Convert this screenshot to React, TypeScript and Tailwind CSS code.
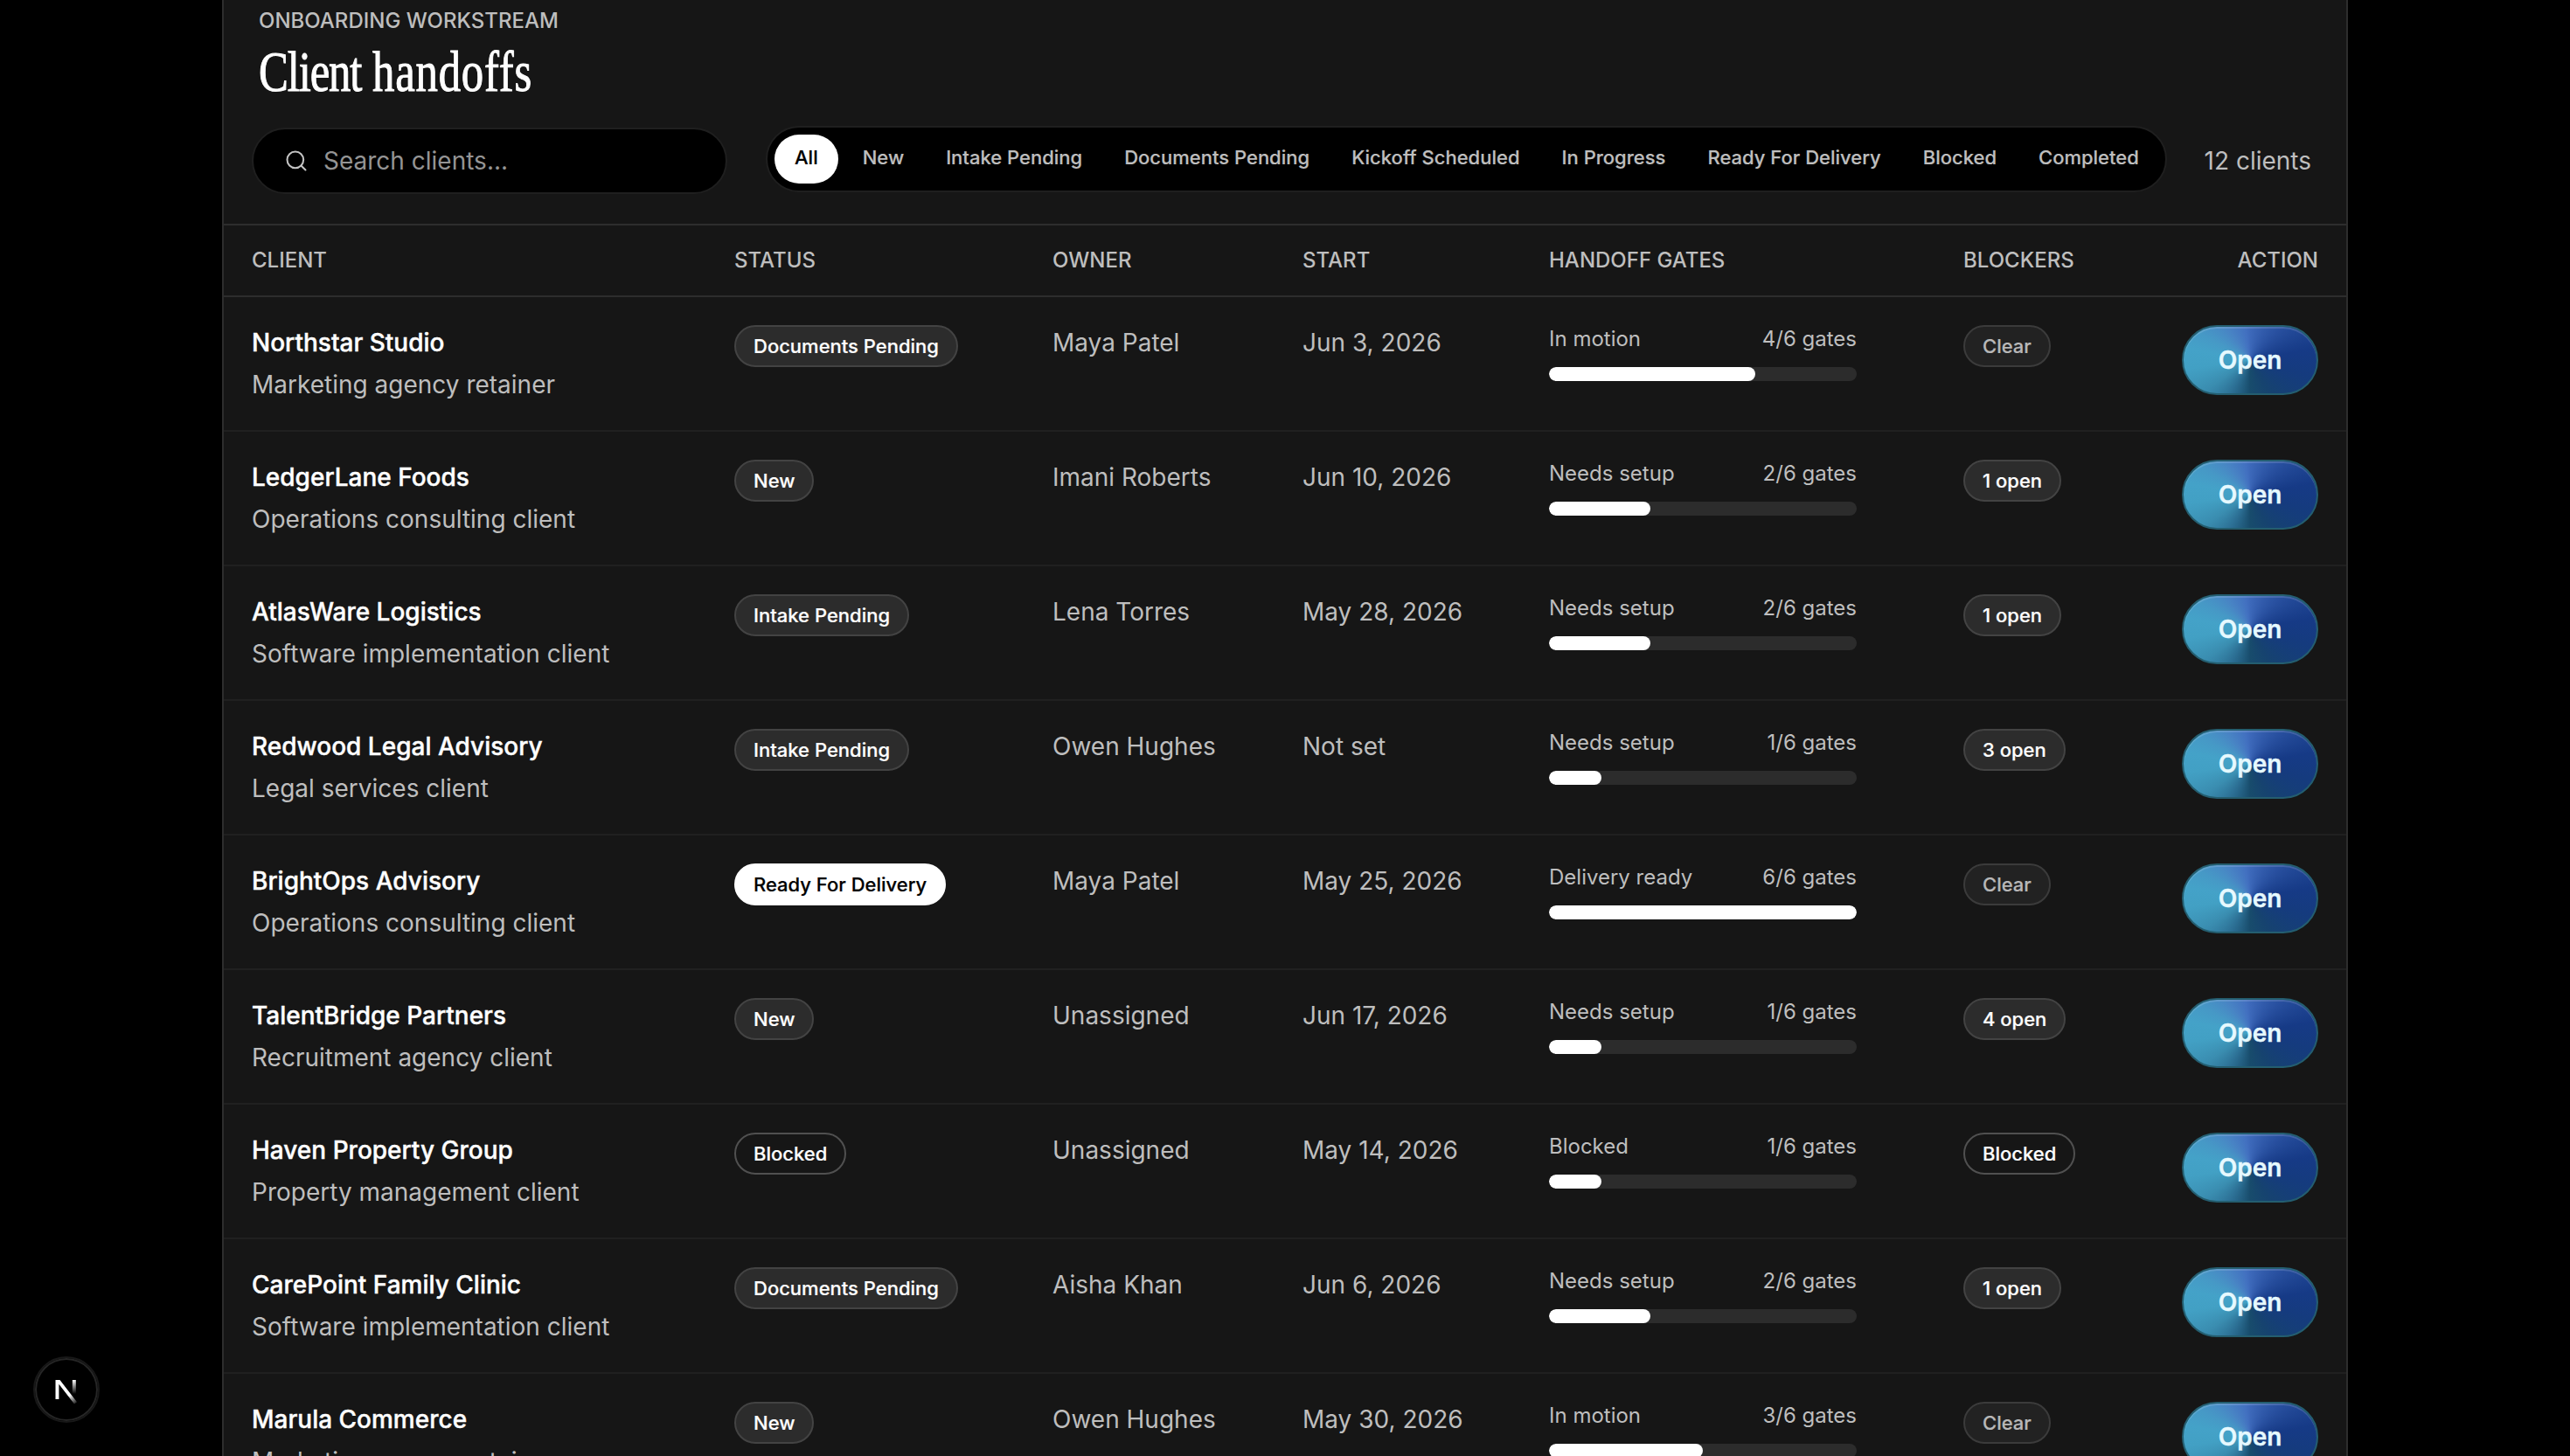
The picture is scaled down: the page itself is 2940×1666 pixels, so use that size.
import { Search } from "lucide-react";
import clsx from "clsx";

type Client = {
  name: string;
  type: string;
  status: string;
  owner: string;
  start: string;
  stage: string;
  gates: number;
  blockers: string;
};

const filters = [
  "All",
  "New",
  "Intake Pending",
  "Documents Pending",
  "Kickoff Scheduled",
  "In Progress",
  "Ready For Delivery",
  "Blocked",
  "Completed",
];

const columns = ["Client", "Status", "Owner", "Start", "Handoff gates", "Blockers", "Action"];

const clients: Client[] = [
  { name: "Northstar Studio", type: "Marketing agency retainer", status: "Documents Pending", owner: "Maya Patel", start: "Jun 3, 2026", stage: "In motion", gates: 4, blockers: "Clear" },
  { name: "LedgerLane Foods", type: "Operations consulting client", status: "New", owner: "Imani Roberts", start: "Jun 10, 2026", stage: "Needs setup", gates: 2, blockers: "1 open" },
  { name: "AtlasWare Logistics", type: "Software implementation client", status: "Intake Pending", owner: "Lena Torres", start: "May 28, 2026", stage: "Needs setup", gates: 2, blockers: "1 open" },
  { name: "Redwood Legal Advisory", type: "Legal services client", status: "Intake Pending", owner: "Owen Hughes", start: "Not set", stage: "Needs setup", gates: 1, blockers: "3 open" },
  { name: "BrightOps Advisory", type: "Operations consulting client", status: "Ready For Delivery", owner: "Maya Patel", start: "May 25, 2026", stage: "Delivery ready", gates: 6, blockers: "Clear" },
  { name: "TalentBridge Partners", type: "Recruitment agency client", status: "New", owner: "Unassigned", start: "Jun 17, 2026", stage: "Needs setup", gates: 1, blockers: "4 open" },
  { name: "Haven Property Group", type: "Property management client", status: "Blocked", owner: "Unassigned", start: "May 14, 2026", stage: "Blocked", gates: 1, blockers: "Blocked" },
  { name: "CarePoint Family Clinic", type: "Software implementation client", status: "Documents Pending", owner: "Aisha Khan", start: "Jun 6, 2026", stage: "Needs setup", gates: 2, blockers: "1 open" },
  { name: "Marula Commerce", type: "Marketing agency retainer", status: "New", owner: "Owen Hughes", start: "May 30, 2026", stage: "In motion", gates: 3, blockers: "Clear" },
];

const rowGrid = "grid grid-cols-[552px_364px_286px_282px_474px_1fr] px-8";

function Badge({ label }: { label: string }) {
  return (
    <span
      className={clsx(
        "inline-flex h-12 items-center rounded-full border-2 px-5 text-[22px] font-medium whitespace-nowrap [-webkit-text-stroke:0.2px]",
        label === "Ready For Delivery" && "border-white bg-white text-black",
        label === "Blocked" && "border-[#505050] text-white",
        label === "Clear" && "border-[#3b3b3b] bg-[#222222] text-[#b8b8b8]",
        !["Ready For Delivery", "Blocked", "Clear"].includes(label) &&
          "border-[#434343] bg-[#2c2c2c] text-white",
      )}
    >
      {label}
    </span>
  );
}

function OpenButton() {
  return (
    <button className="h-20 w-[156px] rounded-full border-2 border-[#245e70] bg-[conic-gradient(from_0deg,#3d69ba_0deg,#2a52a2_40deg,#163a86_80deg,#153b7e_105deg,#16436f_150deg,#184c6c_180deg,#2c6f94_210deg,#3a8db0_236deg,#42a0c4_262deg,#44a2c8_280deg,#4699c6_298deg,#4883c4_325deg,#4270c0_352deg,#3d69ba_360deg)] text-[28px] font-semibold text-[#e6f9ff] shadow-[inset_0_2px_0_rgba(255,255,255,0.14)] [-webkit-text-stroke:0.4px]">
      Open
    </button>
  );
}

function ClientRow({ client }: { client: Client }) {
  return (
    <div className={clsx(rowGrid, "h-[154px] border-b-2 border-[#202020] pt-8 text-[28px] leading-10 text-[#bebebe]")}>
      <div>
        <div className="font-medium text-white [-webkit-text-stroke:0.4px]">{client.name}</div>
        <div className="mt-2">{client.type}</div>
      </div>
      <div>
        <Badge label={client.status} />
      </div>
      <div>{client.owner}</div>
      <div>{client.start}</div>
      <div className="w-[352px]">
        <div className="flex justify-between text-2xl leading-8">
          <span>{client.stage}</span>
          <span>{client.gates}/6 gates</span>
        </div>
        <div className="mt-4 h-4 overflow-hidden rounded-full bg-[#2c2c2c]">
          <div
            className="h-full rounded-full bg-white"
            style={{ width: `${Math.round((client.gates / 6) * 100)}%` }}
          />
        </div>
      </div>
      <div className="flex items-start justify-between">
        <Badge label={client.blockers} />
        <OpenButton />
      </div>
    </div>
  );
}

function DevBadge() {
  return (
    <div className="absolute top-[1552px] left-[38px] flex size-[76px] items-center justify-center rounded-full border-2 border-[#181818] bg-black shadow-[inset_0_0_0_2px_#262626]">
      <svg width="68" height="68" viewBox="0 0 68 68" fill="none">
        <defs>
          <linearGradient id="diag" x1="38" y1="40" x2="46" y2="51" gradientUnits="userSpaceOnUse">
            <stop stopColor="#fff" />
            <stop offset="1" stopColor="#fff" stopOpacity="0" />
          </linearGradient>
          <linearGradient id="stem" x1="43" y1="23" x2="43" y2="39" gradientUnits="userSpaceOnUse">
            <stop stopColor="#fff" />
            <stop offset="1" stopColor="#fff" stopOpacity="0" />
          </linearGradient>
        </defs>
        <path d="M21.5 23h5L46 48.2l-3 2.3L25.4 27.8V45h-3.9z" fill="url(#diag)" />
        <path d="M40.8 23h4v16h-4z" fill="url(#stem)" />
      </svg>
    </div>
  );
}

export default function App() {
  return (
    <main className="relative h-[1666px] w-[2940px] overflow-hidden bg-black font-[Inter,sans-serif] text-white">
      <section className="mx-auto h-[1740px] w-[2432px] border-x-2 border-[#2d2d2d] bg-[#161616]">
        <header className="flex h-[258px] flex-col border-b-2 border-[#2d2d2d] px-8 pt-2">
          <div className="pl-2">
            <p className="text-2xl leading-8 font-medium text-[#bebebe] uppercase">Onboarding workstream</p>
            <h2 className="mt-0.5 h-20 origin-left scale-x-[0.77] font-['Liberation_Serif',serif] text-[66px] leading-20 whitespace-nowrap [-webkit-text-stroke:1px]">
              <span className="tracking-[-1.5px]">Client</span>{" "}
              <span className="tracking-[1px]">handoffs</span>
            </h2>
          </div>
          <div className="mt-[22px] flex items-start">
            <label className="mt-0.5 flex h-[76px] w-[544px] items-center rounded-full border-2 border-[#1f1f1f] bg-black pl-[35px] text-[28px] text-[#949494]">
              <Search className="mr-[17px] size-7 text-[#c4c4c4]" strokeWidth={1.75} />
              Search clients...
            </label>
            <nav className="ml-11 flex h-[76px] items-center gap-1 rounded-full border-2 border-[#1f1f1f] bg-black px-2">
              {filters.map((filter, i) => (
                <button
                  key={filter}
                  className={clsx(
                    "h-14 rounded-full pb-1 text-[22px] font-medium whitespace-nowrap [-webkit-text-stroke:0.2px]",
                    i === 0 ? "mr-0.5 bg-white px-[23px] text-black" : "px-[22px] text-[#bebebe]",
                  )}
                >
                  {filter}
                </button>
              ))}
            </nav>
            <p className="mt-0.5 mr-2 ml-auto text-[28px] leading-[76px] whitespace-nowrap text-[#bebebe]">12 clients</p>
          </div>
        </header>

        <div className={clsx(rowGrid, "h-[82px] items-center border-b-2 border-[#2d2d2d] text-2xl font-medium text-[#bebebe] uppercase")}>
          {columns.slice(0, 5).map((column) => (
            <div key={column}>{column}</div>
          ))}
          <div className="flex justify-between">
            <span>{columns[5]}</span>
            <span>{columns[6]}</span>
          </div>
        </div>

        {clients.map((client) => (
          <ClientRow key={client.name} client={client} />
        ))}
      </section>
      <DevBadge />
    </main>
  );
}
